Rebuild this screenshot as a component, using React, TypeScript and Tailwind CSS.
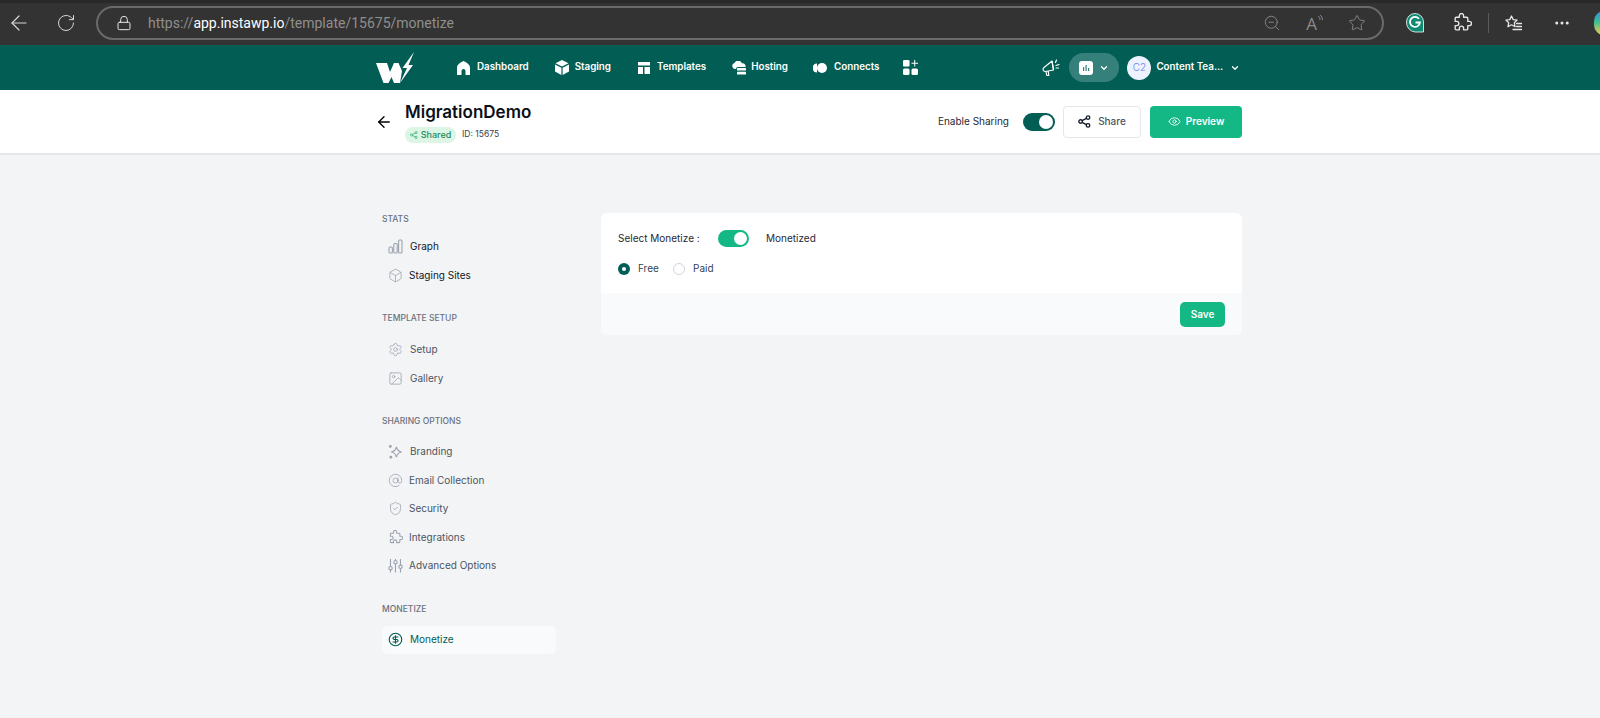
import { ArrowLeft, Box, ChevronDown, Eye, Image, AtSign, MoreHorizontal, RotateCw, ZoomOut, Settings, ShieldCheck, Star, Lock, CircleDollarSign } from 'lucide-react';
import type { ReactNode } from 'react';

const GraphIcon = () => (
  <svg width="15" height="15" viewBox="0 0 15 15" fill="none" stroke="#9ca3af" strokeWidth="1.100">
    <rect x="1" y="8" width="3.400" height="6" rx="1" />
    <rect x="5.800" y="4.500" width="3.400" height="9.500" rx="1" />
    <rect x="10.600" y="1" width="3.400" height="13" rx="1" />
  </svg>
);

const BrandingIcon = () => (
  <svg width="16" height="16" viewBox="0 0 16 16" fill="none" stroke="#9ca3af" strokeWidth="1.200">
    <path d="M9 2.500c.6 3.200 1.700 4.700 5.500 5.500-3.800.8-4.900 2.300-5.500 5.500-.6-3.200-1.700-4.700-5.500-5.500 3.800-.8 4.900-2.300 5.500-5.500z" />
    <circle cx="2.500" cy="2" r="1.500" fill="#9ca3af" stroke="none" />
    <circle cx="3" cy="13.500" r="1.500" fill="#9ca3af" stroke="none" />
  </svg>
);

const SlidersIcon = () => (
  <svg width="15" height="15" viewBox="0 0 15 15" fill="none" stroke="#9ca3af" strokeWidth="1.100">
    <path d="M2.500 1v7.500M2.500 12v2.500M7.500 1v1.500M7.500 6v8.500M12.500 1v6M12.500 10.500v4" />
    <circle cx="2.500" cy="10.200" r="1.700" />
    <circle cx="7.500" cy="4.200" r="1.700" />
    <circle cx="12.500" cy="8.800" r="1.700" />
  </svg>
);

const PuzzleIcon = ({ size, color, width }: { size: number; color: string; width: number }) => (
  <svg width={size} height={size} viewBox="0 0 19 19" fill="none" stroke={color} strokeWidth={width} strokeLinejoin="round">
    <path d="M7 2.500a2 2 0 0 1 4 0V4h3a1 1 0 0 1 1 1v3h1.500a2 2 0 0 1 0 4H15v3a1 1 0 0 1-1 1h-3v-1.500a2 2 0 0 0-4 0V16H4a1 1 0 0 1-1-1v-3h1.500a2 2 0 0 0 0-4H3V5a1 1 0 0 1 1-1h3z" />
  </svg>
);

const Logo = () => (
  <svg width="42" height="33" viewBox="0 0 42 33" fill="#fff">
    <path d="M0 12h11l3 9 4-9h4.500l3.500 8L24 32h-6l-2.500-6-3 6H7.500z" />
    <path d="M38 1 26.500 17H31l-7 15 13-18h-4.500z" />
  </svg>
);

const HomeIcon = () => (
  <svg width="13" height="14" viewBox="0 0 13 14" fill="#fff">
    <path d="M6.500 0C9 1 13 3.500 13 6.500V14H8.500V10a2 2 0 0 0-4 0v4H0V6.500C0 3.500 4 1 6.500 0z" />
  </svg>
);

const CubeIcon = () => (
  <svg width="14" height="15" viewBox="0 0 14 15" fill="#fff">
    <path d="M7 0l6.500 3.200L7 6.500.5 3.200z" />
    <path d="M0 4.500l6.400 3.200V15L0 11.500z" />
    <path d="M14 4.500 7.600 7.700V15L14 11.500z" />
  </svg>
);

const TemplateIcon = () => (
  <svg width="12" height="12" viewBox="0 0 12 12" fill="#fff">
    <rect width="12" height="3.500" />
    <rect y="5" width="5" height="7" />
    <rect x="6.500" y="5" width="5.500" height="7" />
  </svg>
);

const HostingIcon = () => (
  <svg width="14" height="14" viewBox="0 0 14 14" fill="#fff">
    <path d="M3 8a3 3 0 0 1-.5-5.900A4 4 0 0 1 10 2.500 2.800 2.800 0 0 1 13.500 6H6a2 2 0 0 0-2 2z" />
    <rect x="5" y="7" width="9" height="2.600" rx=".5" />
    <rect x="5" y="10.800" width="9" height="2.600" rx=".5" />
  </svg>
);

const ConnectsIcon = () => (
  <svg width="14" height="10" viewBox="0 0 14 10" fill="#fff">
    <path d="M4 .5v9a4.500 4.500 0 0 1 0-9z" />
    <circle cx="9" cy="5" r="5" />
  </svg>
);

const AppsIcon = () => (
  <svg width="15" height="15" viewBox="0 0 15 15" fill="#fff">
    <rect width="6.500" height="6.500" rx="1.200" />
    <rect y="8.500" width="6.500" height="6.500" rx="1.500" />
    <rect x="8.500" y="8.500" width="6.500" height="6.500" rx="1.500" />
    <path d="M11.200 0h1v2.700H15v1h-2.800v2.700h-1V3.700H8.500v-1h2.700z" />
  </svg>
);

const MegaphoneIcon = () => (
  <svg width="20" height="18" viewBox="0 0 20 18" fill="none" stroke="#fff" strokeWidth="1.200" strokeLinejoin="round">
    <path d="M12 2 4 8.500a2.200 2.200 0 0 0 1.500 4L13.500 11z" />
    <path d="M12 2l1.500 9" />
    <path d="M6 12.500l.8 4h2l-.6-4.500" />
    <path d="M15.500 3.500 16.500 1M16 6.500l3-1M16 9h2.500" strokeLinecap="round" />
  </svg>
);

const ShareIcon = ({ size, color }: { size: number; color: string }) => (
  <svg width={size} height={size} viewBox="0 0 14 14" fill="none" stroke={color} strokeWidth="1.400">
    <circle cx="2.800" cy="7" r="1.900" />
    <circle cx="10.800" cy="2.800" r="1.900" />
    <circle cx="10.800" cy="11.200" r="1.900" />
    <path d="M4.500 6.100l4.600-2.400M4.500 7.900l4.600 2.400" />
  </svg>
);

const GrammarlyIcon = () => (
  <svg width="18" height="20" viewBox="0 0 18 20">
    <path d="M9 .5a8.500 8.500 0 0 1 8.500 8.500v10H9A9.500 9.500 0 0 1 .5 9 8.500 8.500 0 0 1 9 .5z" fill="#0f8a72" stroke="#fff" strokeWidth=".8" />
    <path d="M13 5.800A5 5 0 1 0 14 9.500H9.500" fill="none" stroke="#fff" strokeWidth="1.800" />
  </svg>
);

const FavoritesIcon = () => (
  <svg width="19" height="19" viewBox="0 0 19 19" fill="none" stroke="#e6e6e6" strokeWidth="1.300" strokeLinejoin="round">
    <path d="M7.500 2l1.700 3.600 3.900.5-2.800 2.700.7 3.900-3.500-1.900L4 12.700l.7-3.900L1.900 6.100l3.900-.5z" />
    <path d="M12.500 9.500h5M12.500 12.500h5M9 15.500h8.500" strokeLinecap="round" />
  </svg>
);

function NavItem({ icon, label, iconGap, className }: { icon: ReactNode; label: string; iconGap: string; className: string }) {
  return (
    <a className={`flex items-center text-[9.800px] font-semibold text-white ${iconGap} ${className}`}>
      {icon}
      <span>{label}</span>
    </a>
  );
}

function SideItem({ icon, label, strong, gap = 'gap-[7px]' }: { icon: ReactNode; label: string; strong?: boolean; gap?: string }) {
  return (
    <div className={`flex h-[28.5px] items-center pl-[6px] text-[10px] ${gap} ${strong ? 'text-[#111827]' : 'text-[#4b5563]'}`}>
      <span className="flex w-[15px] justify-center">{icon}</span>
      <span>{label}</span>
    </div>
  );
}

function SideLabel({ children }: { children: ReactNode }) {
  return <div className="h-[12px] text-[8.500px] leading-[12px] font-medium text-[#6b7280]">{children}</div>;
}

const gray = { size: 15, color: '#9ca3af', strokeWidth: 1.25 };

export default function App() {
  return (
    <div className="flex h-[718px] w-[1600px] flex-col overflow-hidden bg-[#f3f4f6] font-['Inter',sans-serif]">
      {/* browser chrome */}
      <div className="flex h-[45px] shrink-0 items-center overflow-hidden border-t-[3px] border-[#292929] bg-[#333333] pb-[2px] text-[#d6d6d6]">
        <ArrowLeft size={24} strokeWidth={1.2} className="ml-[7px] shrink-0" />
        <RotateCw size={20} strokeWidth={1.2} className="ml-[25px] shrink-0" />
        <div className="ml-[20px] flex h-[34px] w-[1288px] shrink-0 items-center rounded-full border-2 border-[#6a6a6a] pl-[20px]">
          <Lock size={16} strokeWidth={1.5} className="-ml-[2px] text-[#e4e4e4]" />
          <span className="ml-[16px] font-['Roboto',sans-serif] text-[14px] text-[#8f8f8f]">
            https://<span className="text-white">app.instawp.io</span>/template/15675/monetize
          </span>
          <div className="ml-auto flex items-center gap-[25px] pr-[16px] text-[#8a8a8a]">
            <ZoomOut size={18} strokeWidth={1.2} />
            <span className="flex items-start">
              <span className="font-['Open_Sans',sans-serif] text-[17px] leading-none">A</span>
              <svg width="6" height="9" viewBox="0 0 6 9" fill="none" stroke="#8a8a8a" strokeWidth="1"><path d="M1 1c1.500 1 2 2 2 4M3 0c1.500 1 2.500 2.500 2.500 5" /></svg>
            </span>
            <Star size={18} strokeWidth={1.2} />
          </div>
        </div>
        <span className="ml-[22px] shrink-0"><GrammarlyIcon /></span>
        <span className="ml-[28px] shrink-0"><PuzzleIcon size={20} color="#e6e6e6" width={1.300} /></span>
        <div className="ml-[16px] h-[20px] w-px shrink-0 bg-[#5a5a5a]" />
        <span className="ml-[15px] shrink-0"><FavoritesIcon /></span>
        <MoreHorizontal size={18} className="ml-[30px] shrink-0 text-[#e6e6e6]" />
        <div className="ml-[23px] h-[24px] w-[10px] shrink-0 rounded-l-full bg-gradient-to-b from-[#2f8fe0] via-[#46c08a] to-[#e8c83c]" />
      </div>

      {/* app nav */}
      <nav className="flex h-[45px] shrink-0 items-center bg-[#025e54] pl-[376px]">
        <Logo />
        <NavItem icon={<HomeIcon />} label="Dashboard" iconGap="gap-[7px]" className="ml-[39px]" />
        <NavItem icon={<CubeIcon />} label="Staging" iconGap="gap-[6px]" className="ml-[26px]" />
        <NavItem icon={<TemplateIcon />} label="Templates" iconGap="gap-[7px]" className="ml-[27px]" />
        <NavItem icon={<HostingIcon />} label="Hosting" iconGap="gap-[5px]" className="ml-[26px]" />
        <NavItem icon={<ConnectsIcon />} label="Connects" iconGap="gap-[7px]" className="ml-[25px]" />
        <span className="ml-[24px]"><AppsIcon /></span>
        <span className="ml-[122px]"><MegaphoneIcon /></span>
        <div className="ml-[9px] flex h-[29px] w-[50px] items-center justify-center gap-[6px] rounded-full bg-[#35807a]">
          <span className="flex h-[14px] w-[14px] items-center justify-center rounded-[3px] bg-white">
            <svg width="8" height="8" viewBox="0 0 8 8" fill="#35807a"><rect x="1" y="3" width="1.200" height="4" /><rect x="3.500" y="1" width="1.200" height="6" /><rect x="6" y="4" width="1.200" height="3" /></svg>
          </span>
          <ChevronDown size={10} strokeWidth={3} className="text-white" />
        </div>
        <div className="ml-[8px] flex h-[24px] w-[24px] items-center justify-center rounded-full bg-[#eef2ff] text-[10px] font-light text-[#6b83f0]">C2</div>
        <span className="ml-[5px] text-[9.800px] font-semibold text-white">Content Tea...</span>
        <ChevronDown size={10} strokeWidth={3} className="ml-[7px] text-white" />
      </nav>

      {/* template header */}
      <header className="flex h-[65px] shrink-0 items-center border-b-2 border-[#e5e7eb] bg-white pr-[358px] pl-[376px]">
        <ArrowLeft size={18} strokeWidth={1.8} className="-ml-[1px] text-black" />
        <div className="ml-[12px]">
          <div className="text-[17px] leading-[22px] font-semibold text-[#0b0f19]">MigrationDemo</div>
          <div className="mt-[4px] flex items-center">
            <span className="flex h-[16px] w-[51px] items-center justify-center gap-[3px] rounded-full bg-[#dcf5e4] text-[9px] font-medium text-[#1f8a5f]">
              <ShareIcon size={8} color="#34b27b" />
              Shared
            </span>
            <span className="ml-[6px] text-[8.500px] text-[#374151]">ID: 15675</span>
          </div>
        </div>
        <span className="ml-auto text-[10px] text-[#1f2937]">Enable Sharing</span>
        <div className="ml-[14px] flex h-[18px] w-[32px] items-center justify-end rounded-full bg-[#025e54] px-[2px]">
          <span className="h-[14px] w-[14px] rounded-full bg-white" />
        </div>
        <button className="ml-[8px] flex h-[32px] w-[78px] items-center justify-center gap-[7px] rounded-[4px] border border-[#e5e7eb] bg-white text-[10px] font-medium text-[#4b5563]">
          <ShareIcon size={13} color="#111827" />
          Share
        </button>
        <button className="ml-[9px] flex h-[32px] w-[92px] items-center justify-center gap-[5px] rounded-[4px] bg-[#14b885] text-[10px] font-semibold text-white">
          <Eye size={13} strokeWidth={1.6} />
          Preview
        </button>
      </header>

      {/* content */}
      <main className="flex pt-[58px] pl-[382px]">
        <aside className="w-[174px]">
          <SideLabel>STATS</SideLabel>
          <div className="mt-[7.500px]">
            <SideItem icon={<GraphIcon />} label="Graph" strong />
            <SideItem icon={<Box {...gray} />} label="Staging Sites" strong gap="gap-[6px]" />
          </div>

          <div className="mt-[22.500px]"><SideLabel>TEMPLATE SETUP</SideLabel></div>
          <div className="mt-[11.500px]">
            <SideItem icon={<Settings {...gray} />} label="Setup" />
            <SideItem icon={<Image {...gray} />} label="Gallery" />
          </div>

          <div className="mt-[22.500px]"><SideLabel>SHARING OPTIONS</SideLabel></div>
          <div className="mt-[10.500px]">
            <SideItem icon={<BrandingIcon />} label="Branding" />
            <SideItem icon={<AtSign {...gray} />} label="Email Collection" gap="gap-[6px]" />
            <SideItem icon={<ShieldCheck {...gray} />} label="Security" gap="gap-[6px]" />
            <SideItem icon={<PuzzleIcon size={15} color="#9ca3af" width={1.300} />} label="Integrations" gap="gap-[6px]" />
            <SideItem icon={<SlidersIcon />} label="Advanced Options" gap="gap-[6px]" />
          </div>

          <div className="mt-[22.500px]"><SideLabel>MONETIZE</SideLabel></div>
          <div className="mt-[11px] rounded-[5px] bg-[#f9fafb] text-[#025e54]">
            <div className="flex h-[28px] items-center gap-[7px] pl-[6px] text-[10px]">
              <CircleDollarSign size={15} strokeWidth={1.8} />
              <span>Monetize</span>
            </div>
          </div>
        </aside>

        <section className="ml-[45px] h-[122px] w-[641px] overflow-hidden rounded-[6px] bg-white">
          <div className="h-[80px] px-[17px] pt-[17px]">
            <div className="flex items-center text-[10px] text-[#1f2937]">
              <span className="w-[100px]">Select Monetize :</span>
              <div className="flex h-[17px] w-[31px] items-center justify-end rounded-full bg-[#14b885] px-[2px]">
                <span className="h-[13px] w-[13px] rounded-full bg-white" />
              </div>
              <span className="ml-[17px]">Monetized</span>
            </div>
            <div className="mt-[14px] flex items-center text-[10px] text-[#374151]">
              <span className="flex h-[12px] w-[12px] items-center justify-center rounded-full bg-[#025e54]">
                <span className="h-[4px] w-[4px] rounded-full bg-white" />
              </span>
              <span className="ml-[8px] w-[35px]">Free</span>
              <span className="h-[12px] w-[12px] rounded-full border border-[#d1d5db] bg-white" />
              <span className="ml-[8px]">Paid</span>
            </div>
          </div>
          <div className="flex h-[42px] items-center justify-end bg-[#f9fafb] pr-[17px]">
            <button className="h-[25px] w-[45px] rounded-[5px] bg-[#14b885] text-[10px] font-semibold text-white">Save</button>
          </div>
        </section>
      </main>
    </div>
  );
}
